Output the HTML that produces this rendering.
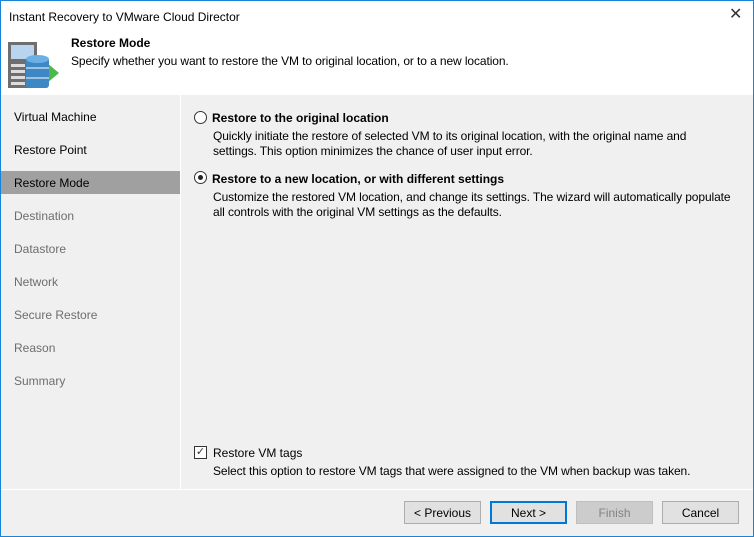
<!DOCTYPE html>
<html><head><style>
*{margin:0;padding:0;box-sizing:border-box}
body{width:754px;height:537px;background:#f0f0f0;font-family:"Liberation Sans",sans-serif;font-size:12px;color:#000;position:relative;overflow:hidden}
.win{position:absolute;left:0;top:0;width:754px;height:537px;border:1px solid #1883d7;}
.abs{position:absolute;white-space:nowrap}
.hdr{position:absolute;left:1px;top:1px;width:752px;height:94px;background:#fff}
.nav{position:absolute;left:1px;width:179px;height:23px;padding-left:13px;line-height:25px;color:#000}
.dis{color:#6d6d6d}
.btn{position:absolute;top:501px;width:77px;height:23px;border:1px solid #adadad;background:#e1e1e1;text-align:center;line-height:22px}
.radio{position:absolute;width:13px;height:13px;border:1px solid #333;border-radius:50%;background:#fff}
.t{letter-spacing:-0.1px}
</style></head><body>
<div class="win"></div>
<div class="hdr"></div>
<div class="abs" style="left:9px;top:10px">Instant Recovery to VMware Cloud Director</div>
<div class="abs" style="left:729px;top:4px;font-size:16px;color:#333">✕</div>
<svg class="abs" style="left:8px;top:42px" width="52" height="47">
<rect x="0" y="0" width="29" height="46" fill="#6e6e6e"/>
<rect x="3" y="3" width="23" height="14" fill="#b8d4ef"/>
<rect x="3" y="22" width="14" height="3" fill="#ddd"/><rect x="3" y="28" width="14" height="3" fill="#ddd"/><rect x="3" y="34" width="14" height="3" fill="#ddd"/><rect x="3" y="40" width="14" height="3" fill="#ddd"/>
<polygon points="33,16 51,31 33,46" fill="#4cb84c"/>
<rect x="18" y="16" width="23" height="30" rx="3" fill="#3d87c4"/>
<ellipse cx="29.5" cy="17" rx="11.5" ry="4" fill="#6ab0e4"/>
<line x1="18" y1="26" x2="41" y2="26" stroke="#fff"/><line x1="18" y1="36" x2="41" y2="36" stroke="#fff"/>
</svg>
<div class="abs" style="left:71px;top:36px;font-weight:bold">Restore Mode</div>
<div class="abs t" style="left:71px;top:54px">Specify whether you want to restore the VM to original location, or to a new location.</div>
<div style="position:absolute;left:180px;top:95px;width:1px;height:395px;background:#fff"></div>
<div style="position:absolute;left:1px;top:489px;width:752px;height:1px;background:#fff"></div>
<div class="nav" style="top:105px">Virtual Machine</div>
<div class="nav" style="top:138px">Restore Point</div>
<div class="nav" style="top:171px;background:#a0a0a0">Restore Mode</div>
<div class="nav dis" style="top:204px">Destination</div>
<div class="nav dis" style="top:237px">Datastore</div>
<div class="nav dis" style="top:270px">Network</div>
<div class="nav dis" style="top:303px">Secure Restore</div>
<div class="nav dis" style="top:336px">Reason</div>
<div class="nav dis" style="top:369px">Summary</div>
<div class="radio" style="left:194px;top:111px"></div>
<div class="abs" style="left:212px;top:111px;font-weight:bold">Restore to the original location</div>
<div class="abs t" style="left:213px;top:129px;line-height:15px">Quickly initiate the restore of selected VM to its original location, with the original name and<br>settings. This option minimizes the chance of user input error.</div>
<div class="radio" style="left:194px;top:171px"><div style="position:absolute;left:3px;top:3px;width:5px;height:5px;border-radius:50%;background:#222"></div></div>
<div class="abs" style="left:212px;top:172px;font-weight:bold">Restore to a new location, or with different settings</div>
<div class="abs t" style="left:213px;top:190px;line-height:15px">Customize the restored VM location, and change its settings. The wizard will automatically populate<br>all controls with the original VM settings as the defaults.</div>
<div style="position:absolute;left:194px;top:446px;width:13px;height:13px;border:1px solid #333;background:#fff;font-size:11px;line-height:11px;text-align:center;color:#333">✓</div>
<div class="abs" style="left:213px;top:446px">Restore VM tags</div>
<div class="abs t" style="left:213px;top:464px">Select this option to restore VM tags that were assigned to the VM when backup was taken.</div>
<div class="btn" style="left:404px">&lt; Previous</div>
<div class="btn" style="left:490px;border:2px solid #0078d7;line-height:20px">Next &gt;</div>
<div class="btn" style="left:576px;background:#ccc;border-color:#bfbfbf;color:#838383">Finish</div>
<div class="btn" style="left:662px">Cancel</div>
</body></html>
